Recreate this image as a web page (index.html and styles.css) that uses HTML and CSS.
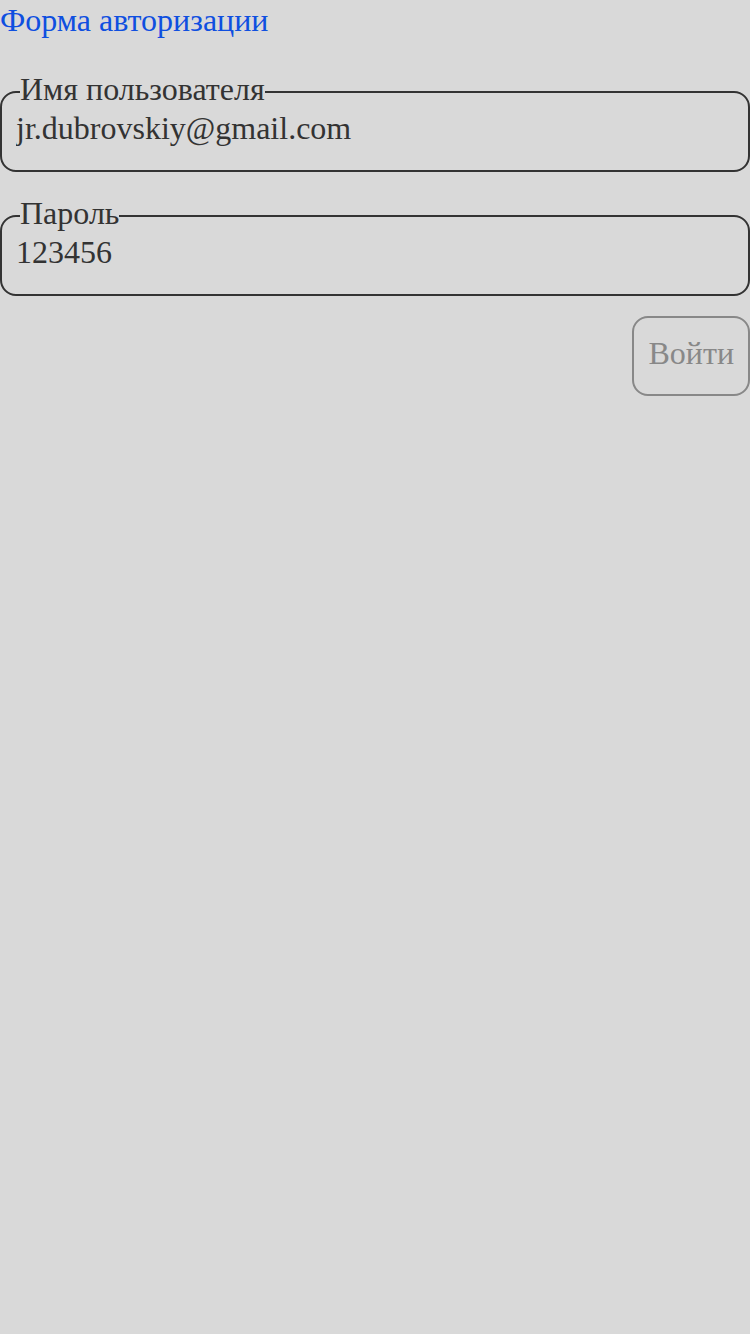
FILE: index.html
```html
<!DOCTYPE html>
<html lang="ru">
<head>
<meta charset="utf-8">
<title>Форма авторизации</title>
<link rel="stylesheet" href="styles.css">
</head>
<body>
<form class="auth">
  <h1 class="title">Форма авторизации</h1>
  <fieldset class="field">
    <legend class="field-label">Имя пользователя</legend>
    <input class="field-input" type="text" value="jr.dubrovskiy@gmail.com">
  </fieldset>
  <fieldset class="field">
    <legend class="field-label">Пароль</legend>
    <input class="field-input" type="text" value="123456">
  </fieldset>
  <div class="actions">
    <button class="submit" type="button">Войти</button>
  </div>
</form>
</body>
</html>
```
FILE: styles.css
```css
html, body {
  margin: 0;
  padding: 0;
  background: #d9d9d9;
}
body {
  font-family: "Liberation Serif", "Times New Roman", serif;
  color: #333333;
  min-height: 1334px;
}
.auth {
  display: flex;
  flex-direction: column;
}
.title {
  margin: 0 0 32px 0;
  font-size: 32px;
  line-height: 40px;
  font-weight: normal;
  color: #0f4fe0;
}
.field {
  margin: 0 0 24px 0;
  padding: 0 14px 23px 14px;
  border: 2px solid #333333;
  border-radius: 16px;
  min-width: 0;
}
.field-label {
  margin-left: 4px;
  padding: 0 0 6px 0;
  font-size: 32px;
  line-height: 34px;
}
.field-input {
  display: block;
  width: 100%;
  box-sizing: border-box;
  margin: -3px 0 0 0;
  padding: 0;
  border: none;
  outline: none;
  background: transparent;
  font-family: "Liberation Serif", "Times New Roman", serif;
  font-size: 32px;
  line-height: 38px;
  height: 38px;
  color: #333333;
}
.actions {
  display: flex;
  justify-content: flex-end;
  margin-top: -4px;
}
.submit {
  height: 80px;
  padding: 0 14px 5px 14px;
  border: 2px solid #888888;
  border-radius: 16px;
  background: transparent;
  font-family: "Liberation Serif", "Times New Roman", serif;
  font-size: 32px;
  color: #888888;
}
```
